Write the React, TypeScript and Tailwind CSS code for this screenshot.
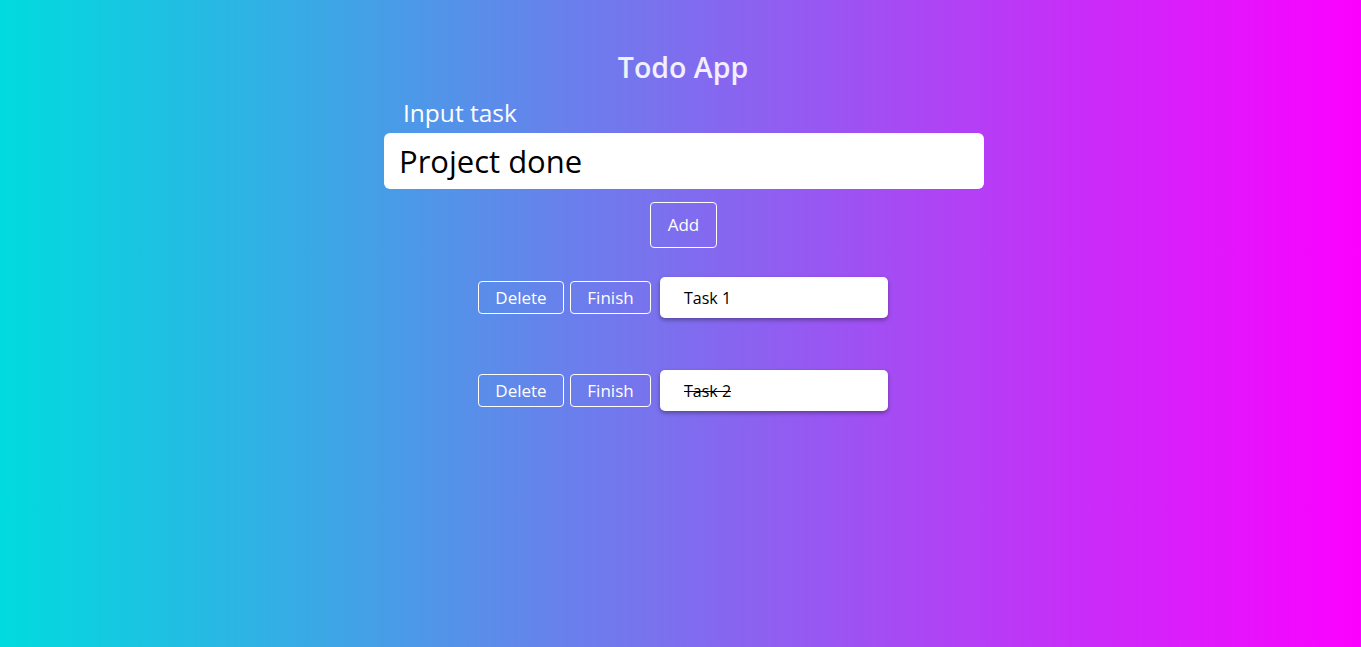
const tasks = [
  { id: 1, text: 'Task 1', done: false },
  { id: 2, text: 'Task 2', done: true },
];

export default function App() {
  return (
    <div
      className="min-h-[647px] w-full pl-[5px] bg-[linear-gradient(to_right,#00dbde,#fc00ff)] flex flex-col items-center"
      style={{ fontFamily: '"Open Sans", sans-serif' }}
    >
      <h1 className="mt-[47px] text-[28.5px] leading-[40px] font-semibold text-white/90">Todo App</h1>
      <div className="w-[600px] mt-[10px] translate-x-[1px]">
        <label className="block pl-[19px] text-[24.5px] leading-[32px] text-white">Input task</label>
        <input
          className="mt-[4px] w-full h-[56px] rounded-[6px] bg-white px-[15px] text-[31px] text-black outline-none"
          defaultValue="Project done"
        />
      </div>
      <button className="mt-[13px] ml-[1px] w-[67px] h-[46px] rounded-[4px] border border-white text-white text-[17px]">
        Add
      </button>
      <div className="mt-[29px] flex flex-col gap-[52px]">
        {tasks.map((t) => (
          <div key={t.id} className="flex items-center">
            <button className="w-[86px] h-[33px] rounded-[4px] border border-white text-white text-[17px]">
              Delete
            </button>
            <button className="ml-[6px] w-[81px] h-[33px] rounded-[4px] border border-white text-white text-[17px]">
              Finish
            </button>
            <div className="ml-[9px] w-[228px] h-[41px] rounded-[5px] bg-white shadow-[0_2px_4px_rgba(0,0,0,0.35)] flex items-center pl-[24px]">
              <span className={`text-[16px] text-black ${t.done ? 'line-through' : ''}`}>
                {t.done ? t.text + ' ' : t.text}
              </span>
            </div>
          </div>
        ))}
      </div>
    </div>
  );
}
